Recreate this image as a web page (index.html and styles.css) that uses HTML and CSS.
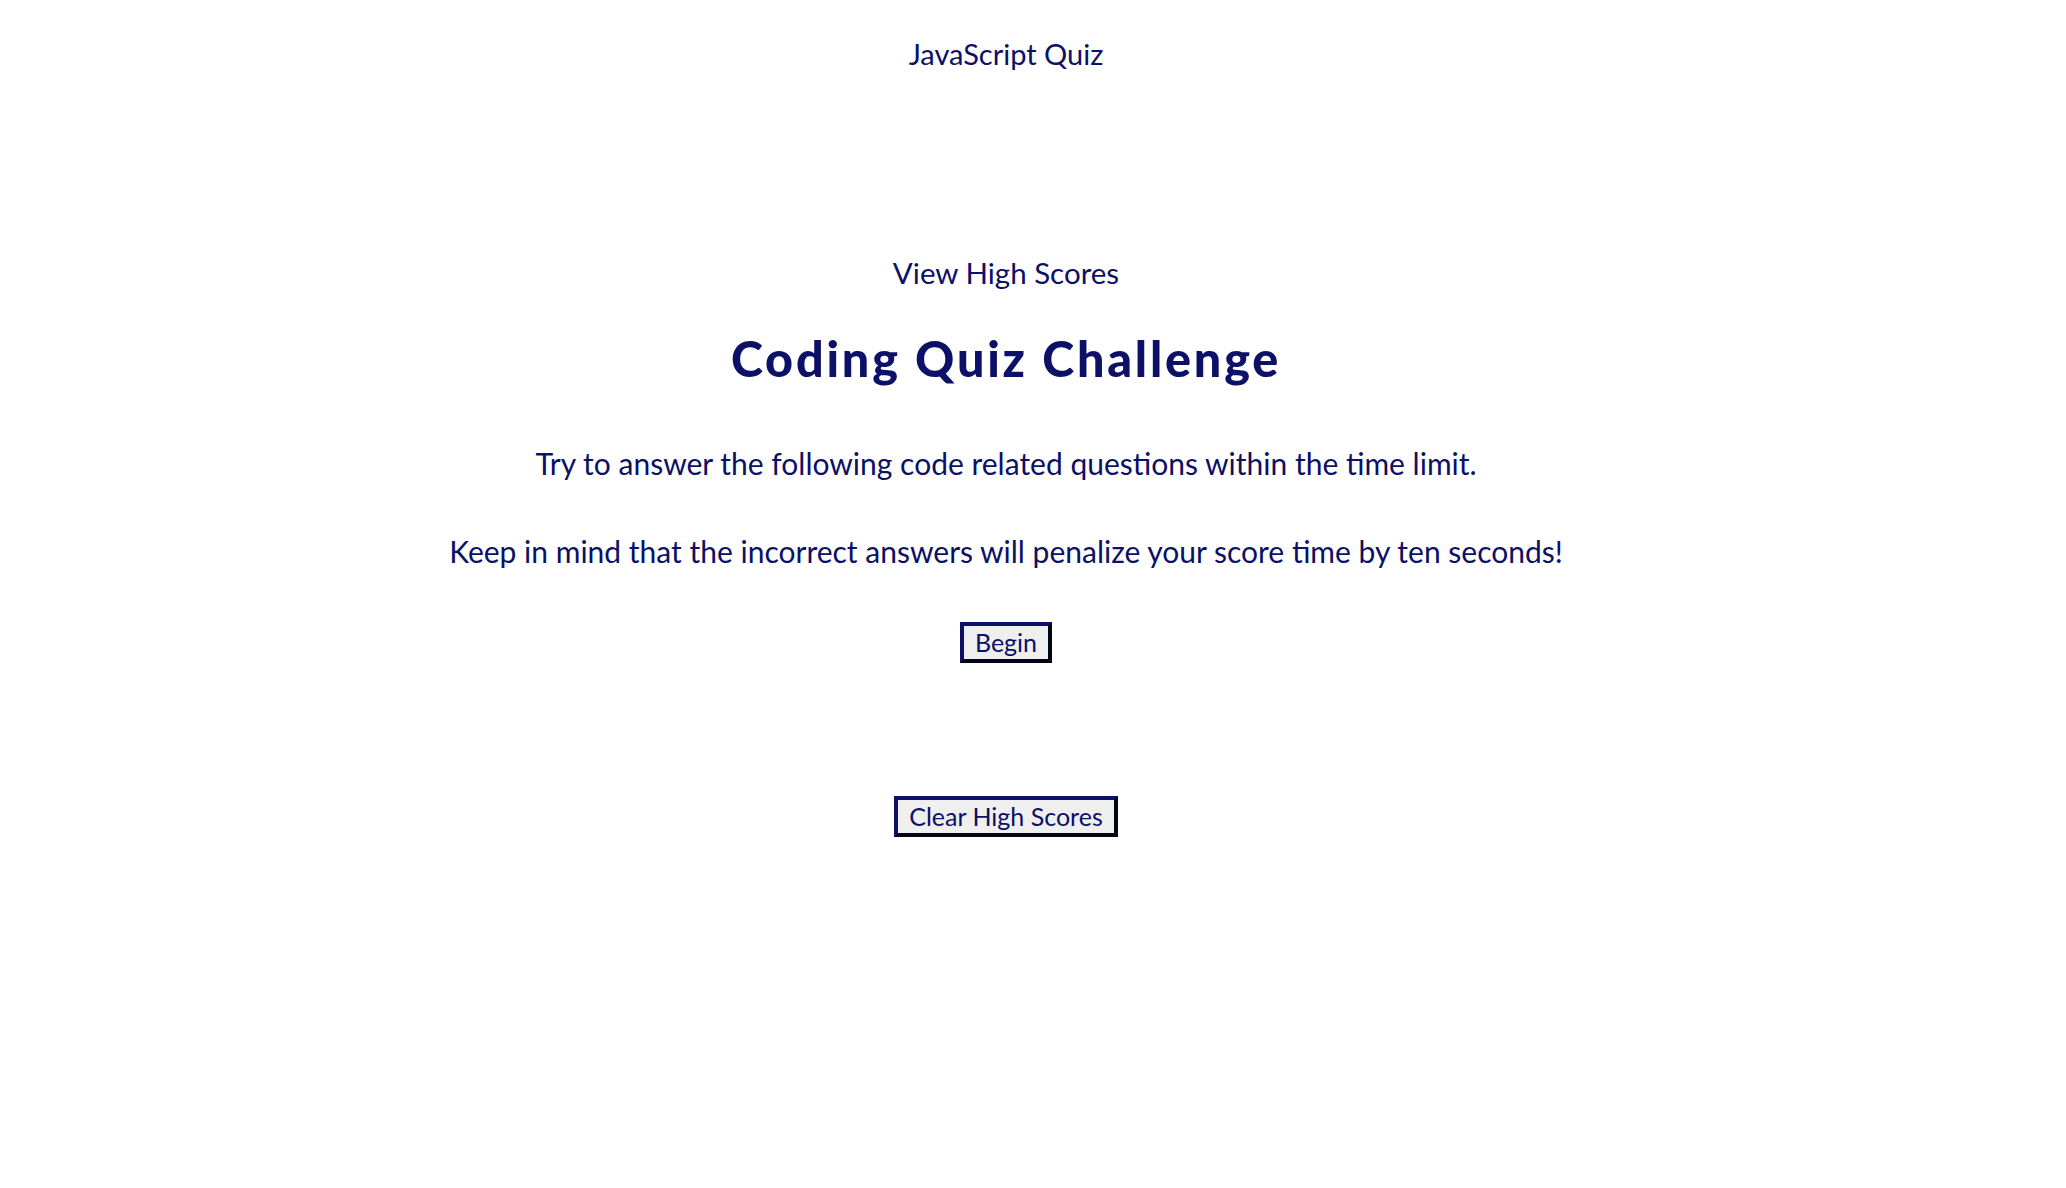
FILE: index.html
```html
<!DOCTYPE html>
<html lang="en">
<head>
<meta charset="utf-8">
<title>JavaScript Quiz</title>
<link rel="stylesheet" href="styles.css">
</head>
<body>
<div class="page">
  <header class="site-header">JavaScript Quiz</header>
  <main class="intro">
    <a class="scores-link" href="#">View High Scores</a>
    <h1 class="title">Coding Quiz Challenge</h1>
    <p class="text text-first">Try to answer the following code related questions within the time limit.</p>
    <p class="text text-second">Keep in mind that the incorrect answers will penalize your score time by ten seconds!</p>
    <button class="btn btn-begin" type="button">Begin</button>
    <button class="btn btn-clear" type="button">Clear High Scores</button>
  </main>
</div>
</body>
</html>
```

FILE: styles.css
```css
html, body {
  margin: 0;
  padding: 0;
  background: #ffffff;
}

body {
  font-family: "Lato", "Open Sans", sans-serif;
  color: #0c1066;
}

.page {
  max-width: 1996px;
  margin: 0 8px;
  display: flex;
  flex-direction: column;
  align-items: center;
}

.site-header {
  padding-top: 34px;
  font-size: 29px;
  line-height: 40px;
}

.intro {
  display: flex;
  flex-direction: column;
  align-items: center;
  padding-top: 179px;
}

.scores-link {
  font-size: 29.5px;
  line-height: 40px;
  color: inherit;
  text-decoration: none;
}

.title {
  margin: 36px 0 0;
  font-size: 48.5px;
  line-height: 58px;
  font-weight: 900;
  letter-spacing: 2.8px;
}

.text {
  margin: 0;
  font-size: 30px;
  line-height: 40px;
}

.text-first {
  margin-top: 56px;
}

.text-second {
  margin-top: 48px;
}

.btn {
  font-family: inherit;
  font-size: 25px;
  line-height: 31px;
  color: #0c1066;
  background: #efefef;
  border-width: 4px;
  border-style: solid;
  border-color: #0c1066 #020418 #020418 #0c1066;
  padding: 1px 11px;
  margin: 0;
  cursor: pointer;
}

.btn-begin {
  margin-top: 51px;
}

.btn-clear {
  margin-top: 133px;
}
```
